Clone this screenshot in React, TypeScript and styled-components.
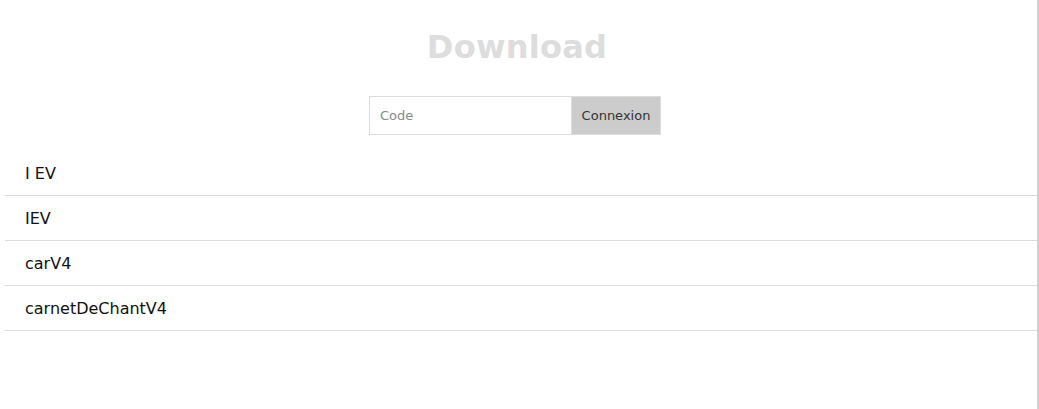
import React from "react";
import styled, { createGlobalStyle } from "styled-components";

const Global = createGlobalStyle`
  html, body { margin: 0; padding: 0; background: #fff; }
  body { font-family: "DejaVu Sans", sans-serif; }
`;

const Page = styled.div`
  margin-left: 5px;
  height: 409px;
  box-sizing: border-box;
  border-right: 2px solid #cfcfcf;
  display: flex;
  flex-direction: column;
`;

const Title = styled.h1`
  margin: 28px 0 0;
  padding-right: 8px;
  text-align: center;
  font-size: 32px;
  line-height: 38px;
  font-weight: bold;
  letter-spacing: 0.25px;
  color: #dddddd;
`;

const Form = styled.form`
  display: flex;
  justify-content: center;
  margin: 30px 0 16px;
  padding-right: 12px;
`;

const CodeInput = styled.input`
  width: 202px;
  height: 39px;
  box-sizing: border-box;
  border: 1px solid #dddddd;
  border-right: none;
  padding: 0 10px;
  font-family: "DejaVu Sans", sans-serif;
  font-size: 13px;
  color: #333;
  outline: none;
  &::placeholder { color: #888; }
`;

const Button = styled.button`
  width: 90px;
  height: 39px;
  box-sizing: border-box;
  border: 1px solid #dddddd;
  background: #cccccc;
  color: #333;
  font-family: "DejaVu Sans", sans-serif;
  font-size: 13px;
  padding: 0;
`;

const List = styled.ul`
  list-style: none;
  margin: 0;
  padding: 0;
`;

const Item = styled.li`
  height: 45px;
  box-sizing: border-box;
  border-bottom: 1px solid #dddddd;
  padding: 0 20px;
  display: flex;
  align-items: center;
  font-size: 16px;
  color: #111;
`;

const items = ["I EV", "IEV", "carV4", "carnetDeChantV4"];

export default function App() {
  return (
    <>
      <Global />
      <Page>
        <Title>Download</Title>
        <Form onSubmit={(e) => e.preventDefault()}>
          <CodeInput placeholder="Code" />
          <Button type="submit">Connexion</Button>
        </Form>
        <List>
          {items.map((t) => (
            <Item key={t}>{t}</Item>
          ))}
        </List>
      </Page>
    </>
  );
}
